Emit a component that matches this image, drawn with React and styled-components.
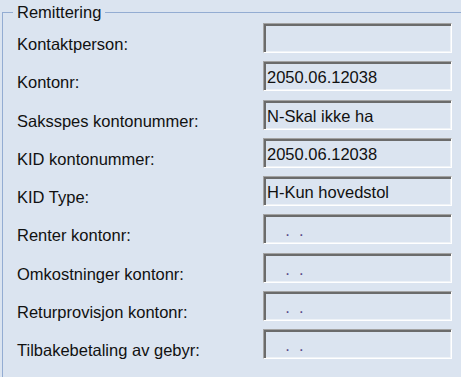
import styled, { createGlobalStyle } from "styled-components";

const rows = [
  { label: "Kontaktperson:", value: "" },
  { label: "Kontonr:", value: "2050.06.12038" },
  { label: "Saksspes kontonummer:", value: "N-Skal ikke ha" },
  { label: "KID kontonummer:", value: "2050.06.12038" },
  { label: "KID Type:", value: "H-Kun hovedstol" },
  { label: "Renter kontonr:", masked: true },
  { label: "Omkostninger kontonr:", masked: true },
  { label: "Returprovisjon kontonr:", masked: true },
  { label: "Tilbakebetaling av gebyr:", masked: true },
];

const App = () => {
  return (
    <>
      <GlobalStyle />
      <Page>
        <Group>
          <Legend>Remittering</Legend>
          <Rows>
            {rows.map((r) => (
              <Row key={r.label}>
                <Label>{r.label}</Label>
                <Field $masked={r.masked}>{r.masked ? "    .  ." : r.value}</Field>
              </Row>
            ))}
          </Rows>
        </Group>
      </Page>
    </>
  );
};

export default App;

const GlobalStyle = createGlobalStyle`
  html, body {
    margin: 0;
    padding: 0;
    background: #dbe4f0;
  }
  body {
    font-family: "Liberation Sans", Arial, sans-serif;
    font-size: 16.5px;
    color: #111;
  }
`;

const Page = styled.div`
  width: 461px;
  height: 377px;
  overflow: hidden;
  background: #dbe4f0;
  padding: 3px 0 0 2px;
  box-sizing: border-box;
`;

const Group = styled.fieldset`
  margin: 0;
  padding: 2px 0 0 10px;
  border: none;
  border-top: 1px solid #93acd2;
  border-left: 1px solid #93acd2;
  min-width: 0;
  height: 420px;
`;

const Legend = styled.legend`
  padding: 0 4px;
  margin-left: 0;
  font-size: 16.5px;
  line-height: 18px;
  color: #111;
`;

const Rows = styled.div`
  display: flex;
  flex-direction: column;
  gap: 8.25px;
`;

const Row = styled.div`
  display: grid;
  grid-template-columns: 250px 189px;
  height: 30px;
`;

const Label = styled.div`
  padding: 12px 0 0 4px;
  line-height: 18px;
  white-space: nowrap;
`;

const Field = styled.div`
  box-sizing: border-box;
  height: 30px;
  border: 1px solid;
  border-color: #a3a3a3 #ffffff #ffffff #a3a3a3;
  box-shadow: inset 2px 2px 0 #6b6b6b, inset -1px -1px 0 #eef2f7;
  padding: 2px 0 0 3px;
  line-height: 26px;
  white-space: pre;
  color: ${(p) => (p.$masked ? "#5a4a8a" : "#111")};
`;
